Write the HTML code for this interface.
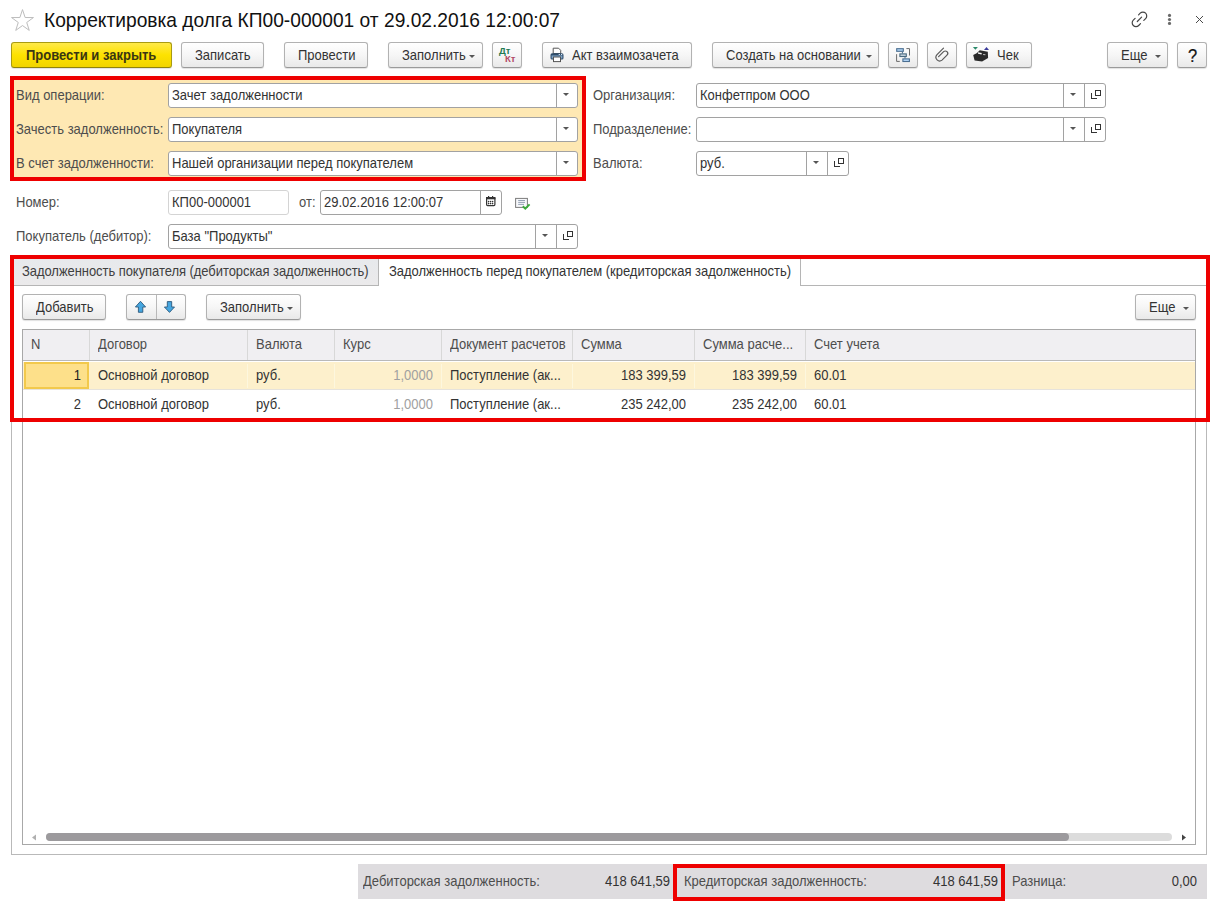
<!DOCTYPE html>
<html><head><meta charset="utf-8">
<style>
*{box-sizing:border-box;margin:0;padding:0}
html,body{width:1225px;height:905px;overflow:hidden;background:#fff}
body{position:relative;font-family:"Liberation Sans",sans-serif;font-size:13px;color:#333}
.a{position:absolute}
.t{position:absolute;white-space:nowrap;line-height:16px}
.btn{position:absolute;height:26px;border:1px solid #b2b2b2;border-bottom-color:#9a9a9a;border-radius:3px;background:linear-gradient(#ffffff,#f6f6f6 50%,#e9e9e9);box-shadow:0 1px 1px rgba(0,0,0,.12);color:#333;line-height:24px;white-space:nowrap}
.btn .tx{position:absolute;top:1px}
.dd{position:absolute;width:0;height:0;border-left:3px solid transparent;border-right:3px solid transparent;border-top:3px solid #555}
.inp{position:absolute;height:25px;border:1px solid #a2a2a2;border-radius:3px;background:#fff;line-height:22px;white-space:nowrap;color:#333}
.inp .tx{position:absolute;left:3px;top:1px}
.sep{position:absolute;top:0;bottom:0;width:1px;background:#a2a2a2}
.lbl{position:absolute;white-space:nowrap;color:#4d4d4d;line-height:16px}
.red{position:absolute;border:4px solid #ee0000}
.hdr{position:absolute;top:0;height:31px;line-height:30px;color:#4d4d4d;white-space:nowrap}
.csep{position:absolute;top:0;width:1px;height:30px;background:#d8d8d8}
.cell{position:absolute;white-space:nowrap;line-height:16px}
.opn{position:absolute;width:14px;height:14px}
.opn:before{content:'';position:absolute;left:7px;top:3px;width:6px;height:6px;border:1px solid #333;box-sizing:border-box}
.opn:after{content:'';position:absolute;left:3px;top:6px;width:6px;height:6px;border-left:1px solid #333;border-bottom:1px solid #333;box-sizing:border-box}
.t,.lbl{transform:scaleY(1.09);transform-origin:0 12.5px}
.btn .tx{transform:scaleY(1.09);transform-origin:0 16.5px}
.inp .tx{transform:scaleY(1.09);transform-origin:0 15.5px}
</style></head>
<body>

<!-- star -->
<svg class="a" style="left:0;top:0" width="45" height="40" viewBox="0 0 45 40"><path d="M22.50 9.60 L25.12 17.50 L33.44 17.55 L26.73 22.48 L29.26 30.40 L22.50 25.55 L15.74 30.40 L18.27 22.48 L11.56 17.55 L19.88 17.50 Z" fill="none" stroke="#bdbdbd" stroke-width="1" stroke-linejoin="miter"/></svg>
<div class="t" style="left:44px;top:10px;font-size:19.2px;line-height:22px;color:#111;transform:scaleY(1.08);transform-origin:0 17.5px">Корректировка долга КП00-000001 от 29.02.2016 12:00:07</div>

<!-- top right icons -->
<svg class="a" style="left:1125px;top:5px" width="30" height="30" viewBox="0 0 30 30">
<path d="M13.6 9.8 L15.2 8.2 A3.8 3.8 0 0 1 20.6 13.6 L18.8 15.4 M10.1 13.3 L8.3 15.1 A3.8 3.8 0 0 0 13.7 20.5 L15.5 18.7 M12.3 16.5 L16.6 12.2" fill="none" stroke="#444" stroke-width="1.2" stroke-linecap="round"/>
</svg>
<svg class="a" style="left:1164px;top:10px" width="12" height="18" viewBox="0 0 12 18">
<circle cx="5.5" cy="5.4" r="1.6" fill="#6a6a6a"/><circle cx="5.5" cy="9.5" r="1.6" fill="#6a6a6a"/><circle cx="5.5" cy="13.4" r="1.6" fill="#6a6a6a"/>
</svg>
<svg class="a" style="left:1192px;top:12px" width="14" height="14" viewBox="0 0 14 14"><path d="M4 4 L11 11 M11 4 L4 11" stroke="#4a4a4a" stroke-width="1"/></svg>

<!-- toolbar -->
<div class="btn" style="left:11px;top:42px;width:161px;border-color:#a99b12;border-bottom-color:#8f830b;background:linear-gradient(#ffe94a,#fde200 50%,#f1d400);font-weight:bold;color:#3a3612"><span class="tx" style="left:14px">Провести и закрыть</span></div>
<div class="btn" style="left:181px;top:42px;width:83px"><span class="tx" style="left:13px">Записать</span></div>
<div class="btn" style="left:284px;top:42px;width:84px"><span class="tx" style="left:13px">Провести</span></div>
<div class="btn" style="left:388px;top:42px;width:95px"><span class="tx" style="left:13px">Заполнить</span><span class="dd" style="left:80px;top:12px"></span></div>
<div class="btn" style="left:492px;top:42px;width:30px">
 <span class="a" style="left:6px;top:3px;font-size:9.5px;line-height:10px;font-weight:bold;color:#237a52">Дт</span>
 <span class="a" style="left:12px;top:11px;font-size:9.5px;line-height:10px;font-weight:bold;color:#b14a66">Кт</span>
</div>
<div class="btn" style="left:542px;top:42px;width:150px">
 <svg class="a" style="left:-1px;top:-1px" width="30" height="26" viewBox="0 0 30 26">
  <path d="M11.2 6.2 H16.6 L18.7 8.3 V11.5 H11.2 Z" fill="#fff" stroke="#555" stroke-width="1"/>
  <rect x="8.5" y="11.3" width="13" height="6.2" rx="1.6" fill="#2f4d6b"/>
  <rect x="9.6" y="13.2" width="10.8" height="3.3" fill="#7fa3c6"/>
  <rect x="9.6" y="12.3" width="10.8" height="1" fill="#2f4d6b"/>
  <rect x="16.7" y="12" width="1.2" height="1" fill="#dfeaf5"/><rect x="19" y="12" width="1.2" height="1" fill="#dfeaf5"/>
  <rect x="11.5" y="15" width="7" height="4.6" fill="#fff" stroke="#555" stroke-width="1"/>
 </svg>
 <span class="tx" style="left:29px">Акт взаимозачета</span>
</div>
<div class="btn" style="left:712px;top:42px;width:167px"><span class="tx" style="left:13px">Создать на основании</span><span class="dd" style="left:153px;top:12px"></span></div>
<div class="btn" style="left:888px;top:42px;width:30px">
 <svg class="a" style="left:-1px;top:-1px" width="30" height="26" viewBox="0 0 30 26">
  <path d="M18.4 6.6 H21.5 V13.5 M8.6 12.2 V19.4 H11.8" fill="none" stroke="#6a6a6a" stroke-width="1"/>
  <path d="M14.4 9.5 V11.5 M17 14.7 V16.5" stroke="#4a6a8a" stroke-width="1"/>
  <rect x="8.7" y="6.7" width="6.6" height="2.6" fill="#b5d7f7" stroke="#4a6e90" stroke-width="1.1"/>
  <rect x="11.9" y="11.9" width="6.4" height="2.6" fill="#c6d3de" stroke="#4a6a80" stroke-width="1.1"/>
  <rect x="14.9" y="16.9" width="6.5" height="2.6" fill="#b5d7f7" stroke="#4a6e90" stroke-width="1.1"/>
 </svg>
</div>
<div class="btn" style="left:927px;top:42px;width:30px">
 <svg class="a" style="left:-1px;top:-1px" width="30" height="26" viewBox="0 0 30 26">
  <path d="M16.5 6.2 L9.8 12.9 A3.7 3.7 0 0 0 15.0 18.1 L20.0 13.1 A2.4 2.4 0 0 0 16.6 9.7 L11.6 14.7" fill="none" stroke="#5a5a5a" stroke-width="1.2" stroke-linecap="round"/>
 </svg>
</div>
<div class="btn" style="left:966px;top:42px;width:66px">
 <svg class="a" style="left:-1px;top:-1px" width="30" height="26" viewBox="0 0 30 26">
  <path d="M6.9 5 H11.9 L9.4 7.8 Z" fill="#2a8a6a"/>
  <path d="M18 7.9 H23 L20.5 4.9 Z" fill="#3a3a9a"/>
  <path d="M7.2 12.9 L10.6 11.2 L13.8 8.3 L21.8 9.8 L22.1 16.1 L16.1 19.5 L8.6 18.4 Z" fill="#2a2a2a"/>
  <path d="M11.8 10.3 L15.8 10.9 L15.5 12.4 L12.1 11.8 Z" fill="#f4f4f4"/>
  <path d="M17.2 12 L19.5 12.3 L19.3 13.3 L17 13 Z" fill="#bbb"/>
 </svg>
 <span class="tx" style="left:30px">Чек</span>
</div>
<div class="btn" style="left:1107px;top:42px;width:61px"><span class="tx" style="left:13px">Еще</span><span class="dd" style="left:47px;top:12px"></span></div>
<div class="btn" style="left:1177px;top:42px;width:30px;color:#111;font-size:16.5px;-webkit-text-stroke:0.2px #111"><span class="tx" style="left:10px;top:0px;line-height:26px">?</span></div>


<!-- red box 1 -->
<div class="a" style="left:14px;top:80px;width:568px;height:97px;background:#fee8b3"></div>
<div class="red" style="left:10px;top:76px;width:576px;height:105px"></div>
<div class="lbl" style="left:16px;top:88px">Вид операции:</div>
<div class="lbl" style="left:16px;top:122px">Зачесть задолженность:</div>
<div class="lbl" style="left:16px;top:156px">В счет задолженности:</div>
<div class="inp" style="left:168px;top:83px;width:410px"><span class="tx">Зачет задолженности</span><span class="sep" style="left:387px"></span><span class="dd" style="left:394px;top:9px"></span></div>
<div class="inp" style="left:168px;top:117px;width:410px"><span class="tx">Покупателя</span><span class="sep" style="left:387px"></span><span class="dd" style="left:394px;top:9px"></span></div>
<div class="inp" style="left:168px;top:151px;width:410px"><span class="tx">Нашей организации перед покупателем</span><span class="sep" style="left:387px"></span><span class="dd" style="left:394px;top:9px"></span></div>

<div class="lbl" style="left:593px;top:88px">Организация:</div>
<div class="lbl" style="left:593px;top:122px">Подразделение:</div>
<div class="lbl" style="left:593px;top:156px">Валюта:</div>
<div class="inp" style="left:696px;top:83px;width:410px"><span class="tx">Конфетпром ООО</span><span class="sep" style="left:366px"></span><span class="dd" style="left:373px;top:9px"></span><span class="sep" style="left:387px"></span><span class="opn" style="left:391px;top:3px"></span></div>
<div class="inp" style="left:696px;top:117px;width:410px"><span class="sep" style="left:366px"></span><span class="dd" style="left:373px;top:9px"></span><span class="sep" style="left:387px"></span><span class="opn" style="left:391px;top:3px"></span></div>
<div class="inp" style="left:696px;top:151px;width:153px"><span class="tx">руб.</span><span class="sep" style="left:109px"></span><span class="dd" style="left:116px;top:9px"></span><span class="sep" style="left:130px"></span><span class="opn" style="left:134px;top:3px"></span></div>

<div class="lbl" style="left:16px;top:195px">Номер:</div>
<div class="inp" style="left:168px;top:190px;width:121px;border-color:#d4d4d4"><span class="tx">КП00-000001</span></div>
<div class="lbl" style="left:299px;top:195px">от:</div>
<div class="inp" style="left:320px;top:190px;width:182px"><span class="tx">29.02.2016 12:00:07</span><span class="sep" style="left:159px"></span>
</div>
<svg class="a" style="left:476px;top:186px" width="60" height="30" viewBox="0 0 60 30">
 <rect x="10.6" y="11.6" width="8.3" height="8" rx="1" fill="#fff" stroke="#333" stroke-width="1.2"/>
 <rect x="10" y="11" width="9.5" height="2.3" fill="#333"/>
 <rect x="12" y="10" width="1.2" height="2" fill="#333"/><rect x="16" y="10" width="1.2" height="2" fill="#333"/>
 <g fill="#333"><circle cx="12.6" cy="15.6" r="0.8"/><circle cx="14.6" cy="15.6" r="0.8"/><circle cx="16.6" cy="15.6" r="0.8"/><circle cx="12.6" cy="17.6" r="0.8"/><circle cx="14.6" cy="17.6" r="0.8"/><circle cx="16.6" cy="17.6" r="0.8"/></g>
 <rect x="39.6" y="12.4" width="11.8" height="9" fill="#f7f8fb" stroke="#7c7c7c" stroke-width="1"/>
 <path d="M42.2 14.5 H49 M42.2 16.4 H49 M42.2 18.4 H48" stroke="#8a98ad" stroke-width="0.9"/>
 <path d="M46.8 20.3 L49.3 22.6 L53.6 18.4" fill="none" stroke="#3aaa3a" stroke-width="1.9"/>
</svg>

<div class="lbl" style="left:16px;top:229px">Покупатель (дебитор):</div>
<div class="inp" style="left:168px;top:224px;width:410px"><span class="tx">База "Продукты"</span><span class="sep" style="left:366px"></span><span class="dd" style="left:373px;top:9px"></span><span class="sep" style="left:387px"></span><span class="opn" style="left:391px;top:3px"></span></div>


<!-- outer panel -->
<div class="a" style="left:11px;top:259px;width:1196px;height:596px;border:1px solid #b9b9b9;border-top:none"></div>
<!-- tab strip -->
<div class="a" style="left:14px;top:259px;width:365px;height:27px;background:linear-gradient(#e7e9ec,#ebeaeb);border-right:1px solid #b5b5b5;border-bottom:1px solid #b5b5b5"></div>
<div class="t" style="left:22px;top:264px;color:#404040;letter-spacing:-0.06px">Задолженность покупателя (дебиторская задолженность)</div>
<div class="a" style="left:379px;top:259px;width:422px;height:27px;background:#fff;border-right:1px solid #b5b5b5"></div>
<div class="t" style="left:389px;top:264px;color:#333;letter-spacing:-0.03px">Задолженность перед покупателем (кредиторская задолженность)</div>
<div class="a" style="left:801px;top:285px;width:405px;height:1px;background:#b5b5b5"></div>

<!-- table command bar -->
<div class="btn" style="left:22px;top:294px;width:84px"><span class="tx" style="left:13px">Добавить</span></div>
<div class="btn" style="left:126px;top:294px;width:60px">
 <span class="a" style="left:29px;top:0;width:1px;height:24px;background:#b8b8b8"></span>
 <svg class="a" style="left:-1px;top:-1px" width="60" height="26" viewBox="0 0 60 26">
  <path d="M14.5 7.3 L19.6 13 H16.8 V18.3 H12.4 V13 H9.4 Z" fill="#45a6e0" stroke="#2b587a" stroke-width="0.9" stroke-linejoin="round"/>
  <path d="M43.5 18.4 L48.5 13 H45.7 V7.6 H41.3 V13 H38.4 Z" fill="#45a6e0" stroke="#2b587a" stroke-width="0.9" stroke-linejoin="round"/>
 </svg>
</div>
<div class="btn" style="left:206px;top:294px;width:95px"><span class="tx" style="left:13px">Заполнить</span><span class="dd" style="left:80px;top:12px"></span></div>
<div class="btn" style="left:1135px;top:294px;width:61px"><span class="tx" style="left:13px">Еще</span><span class="dd" style="left:47px;top:12px"></span></div>

<!-- table -->
<div class="a" style="left:22px;top:329px;width:1174px;height:516px;border:1px solid #a8a8a8;background:#fff"></div>
<div class="a" style="left:23px;top:330px;width:1172px;height:31px;background:#f0eff2;border-bottom:1px solid #b9b9b9"></div>
<div class="csep" style="left:89px;top:330px"></div>
<div class="csep" style="left:247px;top:330px"></div>
<div class="csep" style="left:334px;top:330px"></div>
<div class="csep" style="left:441px;top:330px"></div>
<div class="csep" style="left:572px;top:330px"></div>
<div class="csep" style="left:694px;top:330px"></div>
<div class="csep" style="left:805px;top:330px"></div>
<div class="t" style="left:31px;top:337px;color:#4d4d4d">N</div>
<div class="t" style="left:98px;top:337px;color:#4d4d4d">Договор</div>
<div class="t" style="left:256px;top:337px;color:#4d4d4d">Валюта</div>
<div class="t" style="left:343px;top:337px;color:#4d4d4d">Курс</div>
<div class="t" style="left:450px;top:337px;color:#4d4d4d">Документ расчетов</div>
<div class="t" style="left:581px;top:337px;color:#4d4d4d">Сумма</div>
<div class="t" style="left:703px;top:337px;color:#4d4d4d">Сумма расче...</div>
<div class="t" style="left:814px;top:337px;color:#4d4d4d">Счет учета</div>

<div class="a" style="left:23px;top:362px;width:1172px;height:28px;background:#fdf0cc;border-bottom:1px solid #e6e3dc"></div>
<div class="a" style="left:24px;top:362px;width:65px;height:27px;background:#fde08a;border:2px solid #f2c94c"></div>
<div class="a" style="left:23px;top:390px;width:1172px;height:29px;background:#fff;border-bottom:1px solid #f0f0f0"></div>
<div class="a" style="left:247px;top:364px;width:1px;height:24px;background:#fdf7de"></div><div class="a" style="left:334px;top:364px;width:1px;height:24px;background:#fdf7de"></div><div class="a" style="left:441px;top:364px;width:1px;height:24px;background:#fdf7de"></div><div class="a" style="left:572px;top:364px;width:1px;height:24px;background:#fdf7de"></div><div class="a" style="left:694px;top:364px;width:1px;height:24px;background:#fdf7de"></div><div class="a" style="left:805px;top:364px;width:1px;height:24px;background:#fdf7de"></div>

<div class="t" style="left:24px;top:368px;width:57px;text-align:right;color:#222">1</div>
<div class="t" style="left:98px;top:368px">Основной договор</div>
<div class="t" style="left:256px;top:368px">руб.</div>
<div class="t" style="left:334px;top:368px;width:99px;text-align:right;color:#a0a0a0">1,0000</div>
<div class="t" style="left:450px;top:368px">Поступление (ак...</div>
<div class="t" style="left:572px;top:368px;width:114px;text-align:right">183 399,59</div>
<div class="t" style="left:694px;top:368px;width:103px;text-align:right">183 399,59</div>
<div class="t" style="left:814px;top:368px">60.01</div>

<div class="t" style="left:24px;top:397px;width:57px;text-align:right">2</div>
<div class="t" style="left:98px;top:397px">Основной договор</div>
<div class="t" style="left:256px;top:397px">руб.</div>
<div class="t" style="left:334px;top:397px;width:99px;text-align:right;color:#a0a0a0">1,0000</div>
<div class="t" style="left:450px;top:397px">Поступление (ак...</div>
<div class="t" style="left:572px;top:397px;width:114px;text-align:right">235 242,00</div>
<div class="t" style="left:694px;top:397px;width:103px;text-align:right">235 242,00</div>
<div class="t" style="left:814px;top:397px">60.01</div>

<!-- red box 2 -->
<div class="red" style="left:10px;top:255px;width:1200px;height:167px"></div>

<!-- scrollbar -->
<svg class="a" style="left:31px;top:834px" width="6" height="7" viewBox="0 0 6 7"><path d="M5 0.5 L1 3.5 L5 6.5 Z" fill="#b0b0b0"/></svg>
<div class="a" style="left:46px;top:833px;width:1126px;height:8px;border-radius:4px;background:#dcdcdc"></div>
<div class="a" style="left:46px;top:833px;width:1023px;height:8px;border-radius:4px;background:#9c9a9d"></div>
<svg class="a" style="left:1181px;top:834px" width="6" height="7" viewBox="0 0 6 7"><path d="M1 0.5 L5 3.5 L1 6.5 Z" fill="#444"/></svg>

<!-- totals -->
<div class="a" style="left:358px;top:864px;width:849px;height:35px;background:#dedcdf"></div>
<div class="t" style="left:363px;top:874px;color:#4d4d4d">Дебиторская задолженность:</div>
<div class="t" style="left:560px;top:874px;width:110px;text-align:right;color:#333">418 641,59</div>
<div class="t" style="left:684px;top:874px;color:#4d4d4d">Кредиторская задолженность:</div>
<div class="t" style="left:888px;top:874px;width:110px;text-align:right;color:#333">418 641,59</div>
<div class="t" style="left:1012px;top:874px;color:#4d4d4d">Разница:</div>
<div class="t" style="left:1087px;top:874px;width:110px;text-align:right;color:#333">0,00</div>
<div class="red" style="left:673px;top:864px;width:332px;height:37px"></div>

</body></html>
